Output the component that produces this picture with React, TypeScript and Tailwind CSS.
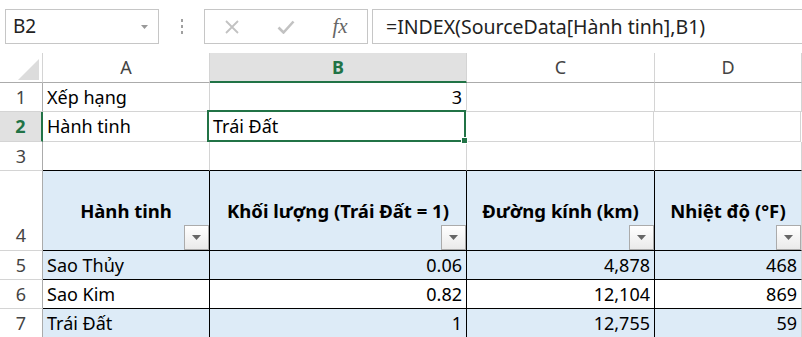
import React from 'react';

const rowHdr = 'w-[43px] shrink-0 flex items-center justify-center text-[#444] border-r border-b border-r-[#ababab] border-b-[#d4d4d4]';

function FilterButton() {
  return (
    <div className="absolute right-0 bottom-0 w-[25px] h-[25px] border border-[#ababab] bg-gradient-to-b from-white to-[#eaeaea] flex items-center justify-center">
      <svg width="9" height="5" viewBox="0 0 9 5">
        <path d="M0 0h9L4.5 5z" fill="#666" />
      </svg>
    </div>
  );
}

function FormulaBar() {
  return (
    <div className="h-[53px] flex items-start pt-[9px] pl-[5px]">
      {/* Name box */}
      <div className="w-[154px] h-[35px] shrink-0 border border-[#c6c6c6] flex items-center justify-between pl-[7px] pr-[10px] text-[19px] text-[#222]">
        <span>B2</span>
        <svg width="7" height="4" viewBox="0 0 7 4">
          <path d="M0 0h7L3.5 4z" fill="#999" />
        </svg>
      </div>

      <div className="w-[45px] h-[35px] shrink-0 flex flex-col items-center justify-center gap-[3px]">
        <div className="w-[2px] h-[3px] bg-[#a0a0a0]" />
        <div className="w-[2px] h-[3px] bg-[#a0a0a0]" />
        <div className="w-[2px] h-[3px] bg-[#a0a0a0]" />
      </div>

      {/* Cancel / enter / function */}
      <div className="w-[164px] h-[35px] shrink-0 border border-[#c6c6c6] grid grid-cols-3 items-center">
        <div className="flex justify-center">
          <svg width="16" height="16" viewBox="0 0 16 16">
            <path d="M2 2l12 12M14 2L2 14" stroke="#c2c2c2" strokeWidth="1.8" />
          </svg>
        </div>
        <div className="flex justify-center">
          <svg width="18" height="14" viewBox="0 0 18 14">
            <path d="M1.5 7.5l5 5L16.5 1.5" stroke="#c2c2c2" strokeWidth="2.6" fill="none" />
          </svg>
        </div>
        <div className="flex justify-center">
          <span className="font-['Liberation_Serif',serif] italic text-[21px] text-[#666] leading-none">
            fx
          </span>
        </div>
      </div>

      {/* Formula */}
      <div className="flex-1 h-[35px] ml-[4px] border-y border-l border-[#c6c6c6] flex items-center pl-[13px] text-[19.5px] text-[#222] whitespace-nowrap">
        =INDEX(SourceData[Hành tinh],B1)
      </div>
    </div>
  );
}

function ColumnHeaders() {
  return (
    <div className="flex h-[30px] text-[#444]">
      <div className="w-[43px] shrink-0 border-r border-b border-r-[#d4d4d4] border-b-[#ababab] flex items-end justify-end pr-[3px] pb-[2px]">
        <svg width="21" height="21" viewBox="0 0 21 21">
          <path d="M21 0v21H0z" fill="#dcdcdc" />
        </svg>
      </div>
      <div className="w-[167px] shrink-0 border-r border-b border-r-[#d4d4d4] border-b-[#ababab] flex items-center justify-center">
        A
      </div>
      <div className="w-[257px] shrink-0 bg-[#e1e1e1] border-r border-b-2 border-r-[#d4d4d4] border-b-[#217346] flex items-center justify-center font-bold text-[#217346]">
        B
      </div>
      <div className="w-[188px] shrink-0 border-r border-b border-r-[#d4d4d4] border-b-[#ababab] flex items-center justify-center">
        C
      </div>
      <div className="w-[147px] shrink-0 border-r border-b border-r-[#d4d4d4] border-b-[#ababab] flex items-center justify-center">
        D
      </div>
    </div>
  );
}

const planets = [
  { name: 'Sao Thủy', mass: '0.06', diameter: '4,878', temp: '468', band: true },
  { name: 'Sao Kim', mass: '0.82', diameter: '12,104', temp: '869', band: false },
  { name: 'Trái Đất', mass: '1', diameter: '12,755', temp: '59', band: true },
];

export default function App() {
  return (
    <div className="w-[802px] h-[337px] overflow-hidden bg-white font-['Noto_Sans',sans-serif] text-[18px] text-black">
      <FormulaBar />
      <ColumnHeaders />

      {/* Row 1 */}
      <div className="flex h-[29px]">
        <div className={rowHdr}>1</div>
        <div className="w-[167px] shrink-0 border-r border-b border-[#d4d4d4] flex items-center pl-[4px]">Xếp hạng</div>
        <div className="w-[257px] shrink-0 border-r border-b border-[#d4d4d4] flex items-center justify-end pr-[4px]">3</div>
        <div className="w-[188px] shrink-0 border-r border-b border-[#d4d4d4]" />
        <div className="w-[147px] shrink-0 border-r border-b border-[#d4d4d4]" />
      </div>

      {/* Row 2 */}
      <div className="flex h-[30px]">
        <div className="w-[43px] shrink-0 flex items-center justify-center bg-[#e1e1e1] font-bold text-[#217346] border-r-2 border-b border-r-[#217346] border-b-[#d4d4d4]">
          2
        </div>
        <div className="w-[166px] shrink-0 border-r border-b border-[#d4d4d4] flex items-center pl-[4px]">Hành tinh</div>
        <div className="relative w-[257px] shrink-0 border-r border-b border-[#d4d4d4] flex items-center pl-[4px]">
          Trái Đất
          <div className="absolute -left-[2px] -top-[2px] -right-[1px] -bottom-[1px] border-2 border-[#217346] z-10" />
          <div className="absolute -right-[3px] -bottom-[3px] w-[7px] h-[7px] bg-[#217346] border border-white z-20" />
        </div>
        <div className="w-[188px] shrink-0 border-r border-b border-[#d4d4d4]" />
        <div className="w-[147px] shrink-0 border-r border-b border-[#d4d4d4]" />
      </div>

      {/* Row 3 */}
      <div className="flex h-[29px]">
        <div className={rowHdr}>3</div>
        <div className="w-[167px] shrink-0 border-r border-b border-r-[#d4d4d4] border-b-black" />
        <div className="w-[257px] shrink-0 border-r border-b border-r-[#d4d4d4] border-b-black" />
        <div className="w-[188px] shrink-0 border-r border-b border-r-[#d4d4d4] border-b-black" />
        <div className="w-[147px] shrink-0 border-r border-b border-r-[#d4d4d4] border-b-black" />
      </div>

      {/* Row 4: table header */}
      <div className="flex h-[80px] font-bold text-[18.5px]">
        <div className="w-[43px] shrink-0 flex items-end justify-center pb-[1px] text-[#444] text-[18px] font-normal border-r border-b border-r-[#ababab] border-b-[#d4d4d4]">
          4
        </div>
        <div className="relative w-[167px] shrink-0 bg-[#ddebf7] border-r border-b border-black flex items-center justify-center">
          Hành tinh
          <FilterButton />
        </div>
        <div className="relative w-[257px] shrink-0 bg-[#ddebf7] border-r border-b border-black flex items-center justify-center">
          Khối lượng (Trái Đất = 1)
          <FilterButton />
        </div>
        <div className="relative w-[188px] shrink-0 bg-[#ddebf7] border-r border-b border-black flex items-center justify-center">
          Đường kính (km)
          <FilterButton />
        </div>
        <div className="relative w-[147px] shrink-0 bg-[#ddebf7] border-r border-b border-r-[#d4d4d4] border-b-black flex items-center justify-center">
          Nhiệt độ (°F)
          <FilterButton />
        </div>
      </div>

      {planets.map((p, i) => (
        <div key={p.name} className={`flex h-[29px] ${p.band ? 'bg-[#ddebf7]' : 'bg-white'}`}>
          <div className={`${rowHdr} bg-white`}>{i + 5}</div>
          <div className="w-[167px] shrink-0 border-r border-b border-black flex items-center pl-[4px]">{p.name}</div>
          <div className="w-[257px] shrink-0 border-r border-b border-black flex items-center justify-end pr-[4px]">{p.mass}</div>
          <div className="w-[188px] shrink-0 border-r border-b border-black flex items-center justify-end pr-[4px]">{p.diameter}</div>
          <div className="w-[147px] shrink-0 border-r border-b border-r-[#d4d4d4] border-b-black flex items-center justify-end pr-[4px]">{p.temp}</div>
        </div>
      ))}
    </div>
  );
}
